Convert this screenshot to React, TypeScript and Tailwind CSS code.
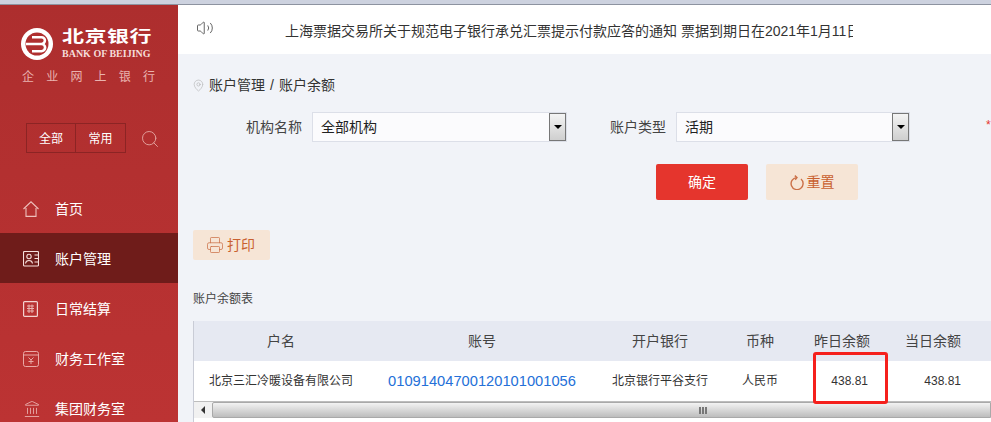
import { Search, Volume2, Printer, MapPin, Landmark } from 'lucide-react';

const FONT = "font-['Liberation_Sans','Noto_Sans_CJK_SC',sans-serif]";

function BankLogo() {
  return (
    <svg width="32" height="32" viewBox="0 0 32 32" className="shrink-0">
      <circle cx="16" cy="16" r="16" fill="#fff" />
      <circle cx="16" cy="16" r="11.5" fill="#af2f2f" />
      <path
        d="M5 16 H20.5 A3.4 3.4 0 0 0 20.5 9.2 H11 M20.5 16 A3.6 3.6 0 0 1 20.5 23.2 H11"
        fill="none"
        stroke="#fff"
        strokeWidth="2.6"
      />
    </svg>
  );
}

function HomeIcon() {
  return (
    <svg width="16" height="16" viewBox="0 0 16 16" fill="none" stroke="#eec0bc" strokeWidth="1.1">
      <path d="M0.5 8 L8 0.8 L15.5 8 M3 7 V15.4 H13 V7" />
    </svg>
  );
}

function AccountIcon() {
  return (
    <svg width="16" height="16" viewBox="0 0 16 16" fill="none" stroke="#f6dfdc" strokeWidth="1.1">
      <rect x="0.5" y="0.5" width="15" height="14.5" rx="1" />
      <circle cx="6" cy="5.5" r="2.2" />
      <path d="M2.5 12.5 C3 8.5 9 8.5 9.5 12.5 M11.5 4 H15 M11.5 7.5 H15 M11.5 11 H15" />
    </svg>
  );
}

function SettleIcon() {
  return (
    <svg width="16" height="16" viewBox="0 0 16 16" fill="none" stroke="#f3d3d0" strokeWidth="1.2">
      <rect x="0.6" y="0.6" width="13.8" height="14.8" rx="1" />
      <path d="M4 5 H11 M4 7.5 H11 M4 10 H11 M6 3.5 V12 M9 3.5 V12" strokeWidth="1" stroke="#eab5b1" />
    </svg>
  );
}

function StudioIcon() {
  return (
    <svg width="16" height="16" viewBox="0 0 16 16" fill="none" stroke="#e9a9a6" strokeWidth="1">
      <rect x="0.5" y="0.5" width="15" height="15" rx="2" />
      <path d="M0.5 4 H15.5 M5.5 6.5 L8 9 L10.5 6.5 M8 9 V13 M5.5 10.5 H10.5" />
    </svg>
  );
}

function ResetIcon() {
  return (
    <svg width="14" height="15" viewBox="0 0 14 15" fill="none" stroke="#cb7048" strokeWidth="1.4">
      <path d="M11 4 A6 6 0 1 1 6.5 2.6" />
      <path d="M4.8 0.6 L7 2.5 L5.2 4.8" />
    </svg>
  );
}

const navItems = [
  { label: '首页', icon: <HomeIcon /> },
  { label: '账户管理', icon: <AccountIcon />, active: true },
  { label: '日常结算', icon: <SettleIcon /> },
  { label: '财务工作室', icon: <StudioIcon /> },
  { label: '集团财务室', icon: <Landmark size={18} strokeWidth={1} color="#f0c4c1" /> },
];

function Sidebar() {
  return (
    <aside className="h-[417px] w-[178px] shrink-0 overflow-hidden bg-gradient-to-b from-[#ad2e2e] to-[#bc3333]">
      <div className="flex h-[32px] mt-[23px] pl-[21px]">
        <BankLogo />
        <div className="ml-[9px] flex flex-col">
          <span className="h-[21px] origin-top scale-y-[0.72] text-[22px] leading-[24px] font-bold tracking-[0.5px] whitespace-nowrap text-white">北京银行</span>
          <span className="font-['Liberation_Serif',serif] text-[10px] leading-[10px] font-bold whitespace-nowrap text-[#f5dcd9]">
            BANK OF BEIJING
          </span>
        </div>
      </div>
      <div className="mt-[9px] pl-[22px] text-[12px] leading-[16px] tracking-[12.2px] whitespace-nowrap text-[#e9b3af]">企业网上银行</div>
      <div className="mt-[38px] flex items-center pl-[26px]">
        <div className="flex h-[30px] w-[50px] items-center justify-center border border-[#8c2424] pt-[1px] text-[12px] text-white">全部</div>
        <div className="flex h-[30px] w-[50px] items-center justify-center border border-l-0 border-[#8c2424] pt-[1px] text-[12px] text-white">常用</div>
        <Search size={20} strokeWidth={1.1} color="#e5a6a2" className="mt-[2px] ml-[14px]" />
      </div>
      <nav className="mt-[30px]">
        {navItems.map((item) => (
          <div key={item.label} className={`flex h-[50px] items-center pt-[2px] pl-[23px] text-[14px] text-white ${item.active ? 'bg-[#6f1c1a]' : ''}`}>
            <span className="flex w-[32px] shrink-0">{item.icon}</span>
            {item.label}
          </div>
        ))}
      </nav>
    </aside>
  );
}

function SelectBox({ value, width }: { value: string; width: string }) {
  return (
    <div className={`flex h-[30px] ${width} items-center justify-between border border-[#dcdfe8] bg-[#fbfbfd] text-[14px] text-[#222]`}>
      <span className="pl-[8px]">{value}</span>
      <span className="flex h-[28px] w-[17px] items-center justify-center border border-[#777] bg-gradient-to-b from-[#f4f4f4] to-[#cfcfcf]">
        <span className="h-0 w-0 border-x-[4px] border-t-[4px] border-x-transparent border-t-black" />
      </span>
    </div>
  );
}

const headCell = 'flex items-center justify-center';

export default function App() {
  return (
    <div className={`h-[422px] w-[991px] overflow-hidden bg-[#f1f3f8] ${FONT}`}>
      <div className="h-[5px] border-b border-[#8d93a0] bg-[#cdd2df]" />
      <div className="flex">
        <Sidebar />
        <main className="min-w-0 flex-1">
          <div className="flex h-[49px] items-start bg-white">
            <Volume2 size={18} strokeWidth={1.2} color="#555" className="mt-[14px] ml-[18px] shrink-0" />
            <div className="mt-[16px] ml-[71px] w-[568px] overflow-hidden text-[14px] leading-[20px] whitespace-nowrap text-[#333]">
              上海票据交易所关于规范电子银行承兑汇票提示付款应答的通知 票据到期日在2021年1月11日
            </div>
          </div>

          <div className="mt-[21px] flex h-[20px] items-center pl-[14px] text-[14px] text-[#333]">
            <MapPin size={13} strokeWidth={1} color="#aaa" className="mr-[4px]" />
            账户管理<span className="mx-[5px]">/</span>账户余额
          </div>

          <div className="relative mt-[17px] flex h-[30px] items-center text-[14px] text-[#444]">
            <span className="ml-[68px] w-[66px]">机构名称</span>
            <SelectBox value="全部机构" width="w-[255px]" />
            <span className="ml-[43px] w-[66px]">账户类型</span>
            <SelectBox value="活期" width="w-[234px]" />
            <span className="absolute top-[4px] left-[808px] text-[12px] text-[#e5352d]">*</span>
          </div>

          <div className="mt-[22px] flex pl-[478px]">
            <button className="h-[36px] w-[92px] rounded-[2px] bg-[#e5352d] text-[14px] text-white">确定</button>
            <button className="ml-[18px] flex h-[36px] w-[92px] items-center justify-center gap-[3px] rounded-[2px] bg-[#f6e5d6] text-[14px] text-[#c9602f]">
              <ResetIcon />
              重置
            </button>
          </div>

          <div className="mt-[30px] pl-[15px]">
            <button className="flex h-[30px] w-[77px] items-center justify-center gap-[3px] pr-[2px] rounded-[2px] bg-[#f6e5d6] text-[14px] text-[#c9602f]">
              <Printer size={18} strokeWidth={1} color="#cb7048" />
              打印
            </button>
            <div className="mt-[30px] text-[12px] leading-[18px] text-[#444]">账户余额表</div>

            <div className="relative mt-[13px] w-[798px] border-l border-[#c9ccd6]">
              <div className="grid h-[40px] grid-cols-[174px_228px_128px_72px_92px_90px_14px] bg-[#e6e9f2] text-[14px] text-[#444]">
                <div className={headCell}>户名</div>
                <div className={headCell}>账号</div>
                <div className={headCell}>开户银行</div>
                <div className={headCell}>币种</div>
                <div className={headCell}>昨日余额</div>
                <div className={headCell}>当日余额</div>
                <div />
              </div>
              <div className="grid h-[41px] grid-cols-[174px_228px_128px_72px_92px_90px_14px] border-b border-[#bdbdbd] bg-white text-[12px] text-[#333]">
                <div className={headCell}>北京三汇冷暖设备有限公司</div>
                <div className={`${headCell} text-[14.7px] text-[#2470d8]`}>01091404700120101001056</div>
                <div className={headCell}>北京银行平谷支行</div>
                <div className={headCell}>人民币</div>
                <div className="flex items-center justify-end pr-[20px]">438.81</div>
                <div className="flex items-center justify-end pr-[17px]">438.81</div>
                <div />
              </div>
              <div className="flex h-[16px] bg-[#f1f1f1]">
                <div className="flex w-[18px] shrink-0 items-center justify-center">
                  <span className="h-0 w-0 border-y-[4px] border-r-[4px] border-y-transparent border-r-[#333]" />
                </div>
                <div className="flex flex-1 items-center gap-[1px] rounded-l-[2px] border border-[#a9a9a9] bg-gradient-to-b from-[#f3f3f3] to-[#bdbdbd] pl-[486px]">
                  <span className="h-[7px] w-[2px] bg-[#777]" />
                  <span className="h-[7px] w-[2px] bg-[#777]" />
                  <span className="h-[7px] w-[2px] bg-[#777]" />
                </div>
              </div>
              <div className="h-[4px] bg-white" />
              <div className="pointer-events-none absolute top-[31px] left-[619px] h-[52px] w-[75px] rounded-[3px] border-[3px] border-[#f5201c]" />
            </div>
          </div>
        </main>
      </div>
    </div>
  );
}
